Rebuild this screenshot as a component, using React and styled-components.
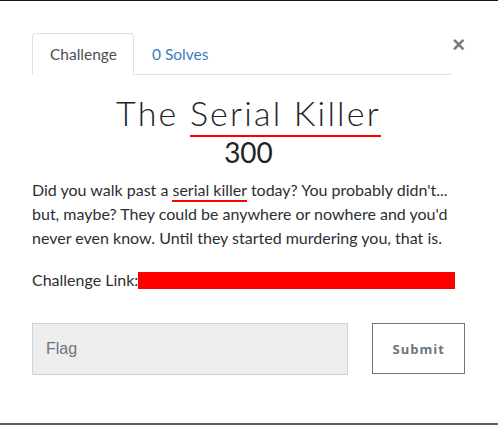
import React from 'react'
import styled, { createGlobalStyle } from 'styled-components'

const GlobalStyle = createGlobalStyle`
    html, body {
        margin: 0;
        padding: 0;
        background: #fff;
    }
    body {
        font-family: Lato, "Open Sans", sans-serif;
        color: #212529;
    }
`

const Page = styled.div`
    width: 498px;
    height: 425px;
    box-sizing: border-box;
    border-top: 1px solid #161a1d;
    border-bottom: 2px solid #5f6163;
    background: #fff;
    position: relative;
    overflow: hidden;
`

const Body = styled.div`
    padding: 32px 33px 0 32px;
`

const TabBar = styled.div`
    display: flex;
    width: 419px;
    border-bottom: 1px solid #dee2e6;
    height: 41px;
`

const Tab = styled.div`
    padding: 0 16px 0 17px;
    margin-bottom: -1px;
    display: flex;
    align-items: center;
    font-size: 15.5px;
    border: 1px solid ${p => (p.$active ? '#dee2e6' : 'transparent')};
    border-bottom-color: ${p => (p.$active ? '#fff' : 'transparent')};
    border-radius: 4px 4px 0 0;
    background: ${p => (p.$active ? '#fff' : 'transparent')};
    color: ${p => (p.$active ? '#495057' : '#3b7cc1')};
`

const Close = styled.button`
    position: absolute;
    top: 33px;
    right: 33px;
    border: none;
    background: none;
    padding: 0;
    font-size: 22px;
    font-weight: 700;
    color: #7a7a7a;
    font-family: "Liberation Sans", Arial, sans-serif;
    line-height: 1;
`

const Title = styled.h1`
    margin: 18px 0 0;
    text-align: center;
    font-family: Lato, sans-serif;
    font-weight: 300;
    font-size: 34px;
    letter-spacing: 2.2px;
    line-height: 40px;
    color: #1f2326;
`

const Mark = styled.span`
    border-bottom: 2px solid #f00;
    padding-bottom: ${p => p.$gap || 0}px;
`

const Value = styled.div`
    text-align: center;
    font-size: 28px;
    line-height: 32px;
    margin-top: 3px;
    color: #1f2326;
`

const Description = styled.p`
    margin: 10px 0 0;
    font-size: 16px;
    line-height: 24px;
    color: #2b2f33;
`

const LinkRow = styled.div`
    margin-top: 20px;
    display: flex;
    align-items: center;
    font-size: 16px;
    color: #2b2f33;
`

const Redacted = styled.span`
    display: inline-block;
    width: 317px;
    height: 17px;
    background: #f00;
    margin-top: 2px;
`

const Form = styled.form`
    display: flex;
    gap: 24px;
    margin-top: 34px;
`

const FlagInput = styled.input`
    width: 318px;
    height: 52px;
    box-sizing: border-box;
    background: #eee;
    border: 1px solid #cdd3da;
    padding: 0 13px;
    font-size: 16px;
    font-family: "Liberation Sans", Arial, sans-serif;
    outline: none;
    &::placeholder {
        color: #6c757d;
    }
`

const Submit = styled.button`
    width: 93px;
    height: 51px;
    background: #fff;
    border: 1px solid #6c757d;
    color: #6c757d;
    font-family: "Open Sans", sans-serif;
    font-weight: 700;
    font-size: 13px;
    letter-spacing: 1px;
`

const App = () => {
    return (
        <>
            <GlobalStyle />
            <Page>
                <Body>
                    <TabBar>
                        <Tab $active>Challenge</Tab>
                        <Tab>0 Solves</Tab>
                    </TabBar>
                    <Title>The <Mark $gap={2}>Serial Killer</Mark></Title>
                    <Value>300</Value>
                    <Description>
                        Did you walk past a <Mark $gap={1}>serial killer</Mark> today? You probably didn't...
                        but, maybe? They could be anywhere or nowhere and you'd never even know. Until they
                        started murdering you, that is.
                    </Description>
                    <LinkRow>
                        Challenge Link:<Redacted />
                    </LinkRow>
                    <Form onSubmit={e => e.preventDefault()}>
                        <FlagInput placeholder="Flag" />
                        <Submit>Submit</Submit>
                    </Form>
                </Body>
                <Close>×</Close>
            </Page>
        </>
    )
}

export default App
